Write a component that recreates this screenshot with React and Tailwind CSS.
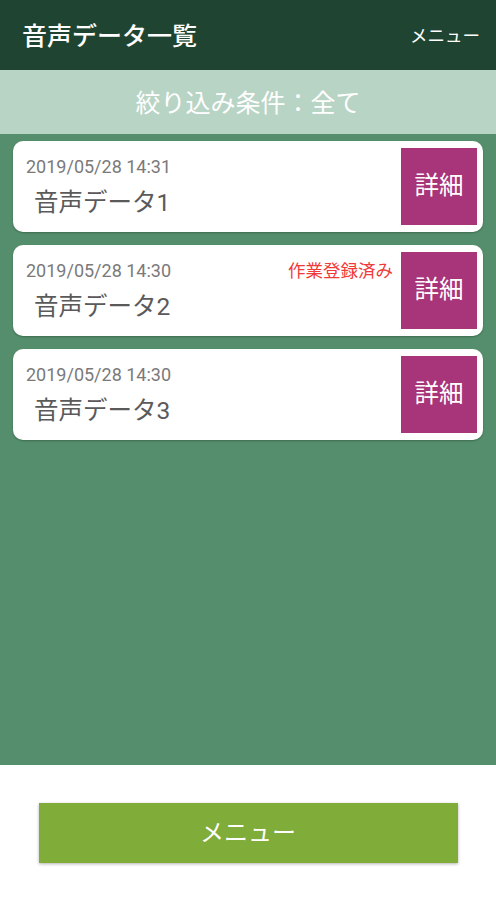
import React from "react";

const font = { fontFamily: 'Roboto, "Noto Sans CJK JP", sans-serif' };

const items = [
  { date: "2019/05/28 14:31", name: "音声データ1", done: false },
  { date: "2019/05/28 14:30", name: "音声データ2", done: true },
  { date: "2019/05/28 14:30", name: "音声データ3", done: false },
];

function Card({ item }) {
  return (
    <div className="flex h-[91px] rounded-[10px] bg-white p-[7px] pr-[6px] shadow-[0_1px_2px_rgba(0,0,0,0.25)]">
      <div className="flex flex-1 flex-col pl-[6px] pt-[9px] pr-[8px]">
        <div className="flex items-center justify-between">
          <span className="text-[18px] leading-[20px] text-[#7a7a7a]">{item.date}</span>
          {item.done && (
            <span className="text-[17.5px] leading-[20px] text-[#f03a3a]">作業登録済み</span>
          )}
        </div>
        <div className="mt-[11px] pl-[8px] text-[24.5px] leading-[30px] text-[#5a5a5a]">{item.name}</div>
      </div>
      <div className="flex h-[77px] w-[76px] items-center justify-center bg-[#a8347a] text-[24.5px] text-white">
        詳細
      </div>
    </div>
  );
}

export default function App() {
  return (
    <div className="flex h-[900px] w-[496px] flex-col bg-white" style={font}>
      <div className="flex h-[70px] items-center justify-between bg-[#1f4532] pl-[22px] pr-[16px] pt-[3px]">
        <span className="text-[25px] font-medium text-white">音声データ一覧</span>
        <span className="text-[17.5px] text-white">メニュー</span>
      </div>
      <div className="flex h-[64px] items-center justify-center bg-[#b8d4c5] pt-[3px] text-[25px] text-white">
        絞り込み条件：全て
      </div>
      <div className="flex flex-1 flex-col gap-[13px] bg-[#548e6c] px-[13px] pt-[7px]">
        {items.map((it, i) => (
          <Card key={i} item={it} />
        ))}
      </div>
      <div className="flex h-[135px] items-start justify-center pt-[38px]">
        <div className="flex h-[60px] w-[419px] items-center justify-center bg-[#80ac3a] text-[24px] text-white shadow-[0_1px_3px_rgba(0,0,0,0.3)]">
          メニュー
        </div>
      </div>
    </div>
  );
}
